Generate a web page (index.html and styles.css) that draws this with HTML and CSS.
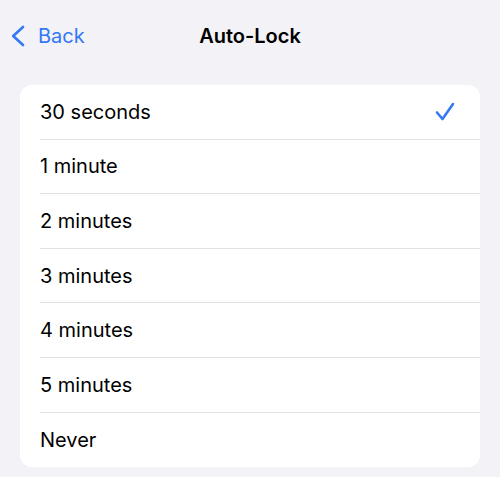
FILE: index.html
```html
<!DOCTYPE html>
<html lang="en">
<head>
  <meta charset="UTF-8">
  <title>Auto-Lock</title>
  <link rel="stylesheet" href="styles.css">
</head>
<body>
  <div class="nav-bar">
    <a class="back-btn" href="#">
      <svg class="chevron" width="15" height="22" viewBox="0 0 15 22">
        <polyline points="12,2 2.2,11 12,20" fill="none" stroke="#3478f6" stroke-width="2.6" stroke-linecap="round" stroke-linejoin="round"/>
      </svg>
      <span>Back</span>
    </a>
    <div class="nav-title">Auto-Lock</div>
    <div></div>
  </div>

  <!-- Auto-lock options -->
  <div class="option-list">
    <div class="option-row"><div class="option-inner"><span>30 seconds</span>
      <svg class="check" width="20" height="19" viewBox="0 0 20 19">
        <polyline points="2,10.5 7.5,17 18,2" fill="none" stroke="#3478f6" stroke-width="2.6" stroke-linecap="round" stroke-linejoin="round"/>
      </svg>
    </div></div>
    <div class="option-row"><div class="option-inner"><span>1 minute</span></div></div>
    <div class="option-row"><div class="option-inner"><span>2 minutes</span></div></div>
    <div class="option-row"><div class="option-inner"><span>3 minutes</span></div></div>
    <div class="option-row"><div class="option-inner"><span>4 minutes</span></div></div>
    <div class="option-row"><div class="option-inner"><span>5 minutes</span></div></div>
    <div class="option-row"><div class="option-inner"><span>Never</span></div></div>
  </div>
</body>
</html>
```

FILE: styles.css
```css
/* Settings page, light theme */
body {
  margin: 0;
  padding: 0;
  background-color: #f2f2f7;
  color: #000;
  font-family: Inter, "Liberation Sans", Arial, sans-serif;
}
/* Top navigation bar */
.nav-bar {
  display: grid;
  grid-template-columns: 1fr auto 1fr;
  align-items: center;
  height: 72px;
  padding: 0 11px;
}
.back-btn {
  display: flex;
  align-items: center;
  gap: 12px;
  color: #3478f6;
  text-decoration: none;
  font-size: 20px;
}
.chevron {
  display: block;
}
.nav-title {
  font-size: 20px;
  font-weight: 600;
}
/* Grouped list card */
.option-list {
  margin: 13px 20px 0;
  background: #fff;
  border-radius: 12px;
  overflow: hidden;
}
.option-row {
  padding-left: 20px;
}
.option-inner {
  display: flex;
  align-items: center;
  justify-content: space-between;
  height: 53.6px;
  padding-right: 25px;
  border-bottom: 1px solid #e2e2e6;
  font-size: 20px;
}
.option-row:last-child .option-inner {
  border-bottom: none;
  height: 54px;
}
.check {
  display: block;
}
```
